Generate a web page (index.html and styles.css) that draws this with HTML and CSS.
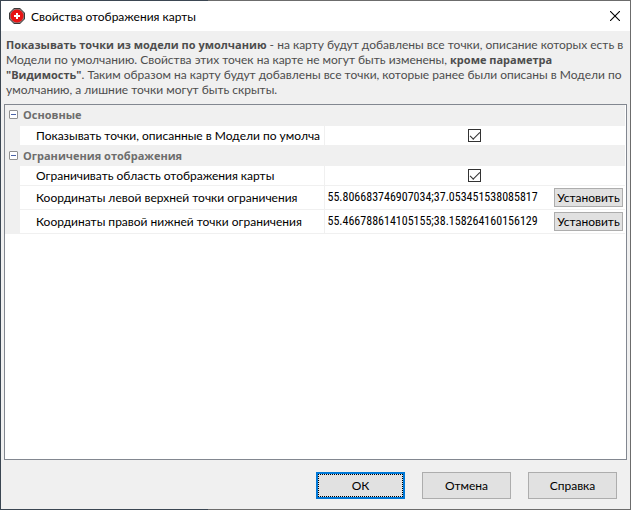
FILE: index.html
```html
<!DOCTYPE html>
<html lang="ru">
<head>
    <meta charset="utf-8">
    <title>Свойства отображения карты</title>
    <link rel="stylesheet" href="styles.css">
</head>
<body>
    <div class="window">
        <div class="title-bar">
            <svg class="logo" viewBox="0 0 16 16" width="16" height="16">
                <path d="M5 0h6l5 5v6l-5 5H5l-5-5V5z" fill="#3a3a3a"/>
                <path d="M5 1h6l4 4v6l-4 4H5l-4-4V5z" fill="#8f7f7f"/>
                <circle cx="8" cy="8" r="6.5" fill="#e81414"/>
                <path d="M7 5h2v2h2v2H9v2H7V9H5V7h2z" fill="#fff"/>
            </svg>
            <h1>Свойства отображения карты</h1>
            <button class="close" aria-label="Закрыть">
                <svg viewBox="0 0 10 10" width="10" height="10">
                    <path d="M0 0L10 10M10 0L0 10" stroke="#000" stroke-width="1.1"/>
                </svg>
            </button>
        </div>

        <p class="description"><b>Показывать точки из модели по умолчанию</b> - на карту будут добавлены все точки, описание которых есть в<br>
        Модели по умолчанию. Свойства этих точек на карте не могут быть изменены, <b>кроме параметра</b><br>
        <b>"Видимость"</b>. Таким образом на карту будут добавлены все точки, которые ранее были описаны в Модели по<br>
        умолчанию, а лишние точки могут быть скрыты.</p>

        <div class="properties">
            <table>
                <colgroup>
                    <col class="col-gutter">
                    <col class="col-name">
                    <col>
                </colgroup>
                <tr class="group">
                    <td><button class="toggle" aria-label="Свернуть"></button></td>
                    <th colspan="2">Основные</th>
                </tr>
                <tr>
                    <td class="gutter"></td>
                    <td class="name"><label for="showPoints">Показывать точки, описанные в Модели по умолча</label></td>
                    <td class="check"><input type="checkbox" id="showPoints" checked></td>
                </tr>
                <tr class="group">
                    <td><button class="toggle" aria-label="Свернуть"></button></td>
                    <th colspan="2">Ограничения отображения</th>
                </tr>
                <tr>
                    <td class="gutter"></td>
                    <td class="name"><label for="limitArea">Ограничивать область отображения карты</label></td>
                    <td class="check"><input type="checkbox" id="limitArea" checked></td>
                </tr>
                <tr class="tall">
                    <td class="gutter"></td>
                    <td class="name"><label for="topLeft">Координаты левой верхней точки ограничения</label></td>
                    <td>
                        <div class="value">
                            <input type="text" id="topLeft" value="55.806683746907034;37.053451538085817">
                            <button class="set">Установить</button>
                        </div>
                    </td>
                </tr>
                <tr class="tall">
                    <td class="gutter"></td>
                    <td class="name"><label for="bottomRight">Координаты правой нижней точки ограничения</label></td>
                    <td>
                        <div class="value">
                            <input type="text" id="bottomRight" value="55.466788614105155;38.158264160156129">
                            <button class="set">Установить</button>
                        </div>
                    </td>
                </tr>
            </table>
        </div>

        <div class="buttons">
            <button class="default">ОК</button>
            <button>Отмена</button>
            <button>Справка</button>
        </div>
    </div>
</body>
</html>
```
FILE: styles.css
```css
* {
    box-sizing: border-box;
}

body {
    margin: 0;
    padding: 1px;
    min-height: 100vh;
    display: flex;
    font-family: Lato, "Liberation Sans", sans-serif;
    font-size: 12px;
    line-height: 15px;
    color: #000;
    background: linear-gradient(to right, #3b4652 33%, #6c6c6c 33%);
}

.window {
    flex: 1;
    min-width: 0;
    display: flex;
    flex-direction: column;
    background-color: #f0f0f0;
}

button,
input {
    font: inherit;
    color: inherit;
    margin: 0;
    padding: 0;
}

button {
    border: 1px solid #adadad;
    background-color: #e1e1e1;
}

b,
th {
    font-family: "Open Sans", sans-serif;
    font-size: 11px;
    line-height: 1;
}

.title-bar {
    display: flex;
    align-items: center;
    gap: 6px;
    height: 30px;
    padding: 0 10px 0 8px;
    background-color: #fff;
}

.title-bar h1 {
    flex: 1;
    margin: 0;
    font-size: 12px;
    font-weight: normal;
}

.close {
    display: flex;
    border: none;
    background: none;
}

.description {
    margin: 0;
    padding: 6px 5px 7px;
    color: #4d4d4d;
    white-space: nowrap;
}

.properties {
    flex: 1;
    margin: 0 3px;
    padding-right: 1px;
    border: 1px solid #828790;
    background-color: #fff;
}

table {
    width: 100%;
    table-layout: fixed;
    border-collapse: collapse;
}

.col-gutter {
    width: 15px;
}

.col-name {
    width: 304px;
}

tr {
    height: 20px;
}

.tall {
    height: 24px;
}

td,
th {
    padding: 0;
    text-align: left;
    border-bottom: 1px solid #f0f0f0;
}

.group {
    background-color: #f0f0f0;
}

.group th {
    padding-left: 3px;
    color: #6d6d6d;
}

.gutter {
    background-color: #f0f0f0;
}

.toggle {
    display: block;
    width: 9px;
    height: 9px;
    margin-left: 4px;
    border: 1px solid #919191;
    border-radius: 1px;
    background: linear-gradient(#4b63a7, #4b63a7) center / 5px 1px no-repeat #fff;
}

.name {
    padding: 0 2px 0 16px;
    border-right: 1px solid #f0f0f0;
}

.name label {
    display: block;
    overflow: hidden;
    white-space: nowrap;
}

.check input {
    display: block;
    appearance: none;
    width: 13px;
    height: 13px;
    margin: 0 auto;
    border: 1px solid #333;
    background-color: #fff;
}

.check input:checked::before {
    content: "";
    display: block;
    width: 9px;
    height: 4px;
    margin: 2px 1px;
    border: solid #333;
    border-width: 0 0 1px 1px;
    transform: rotate(-45deg);
}

.value {
    display: flex;
    align-items: center;
    gap: 6px;
    padding: 0 2px 0 3px;
}

.value input {
    flex: 1;
    min-width: 0;
    height: 19px;
    border: none;
    background: none;
    font-family: "Roboto Condensed", Roboto, sans-serif;
}

.set {
    width: 69px;
    height: 19px;
    line-height: 15px;
}

.buttons {
    display: flex;
    justify-content: flex-end;
    gap: 17px;
    padding: 12px 13px 10px;
}

.buttons button {
    width: 89px;
    height: 27px;
}

.buttons .default {
    border: 2px solid #0078d7;
    outline: 1px dotted #000;
    outline-offset: -3px;
}
```
